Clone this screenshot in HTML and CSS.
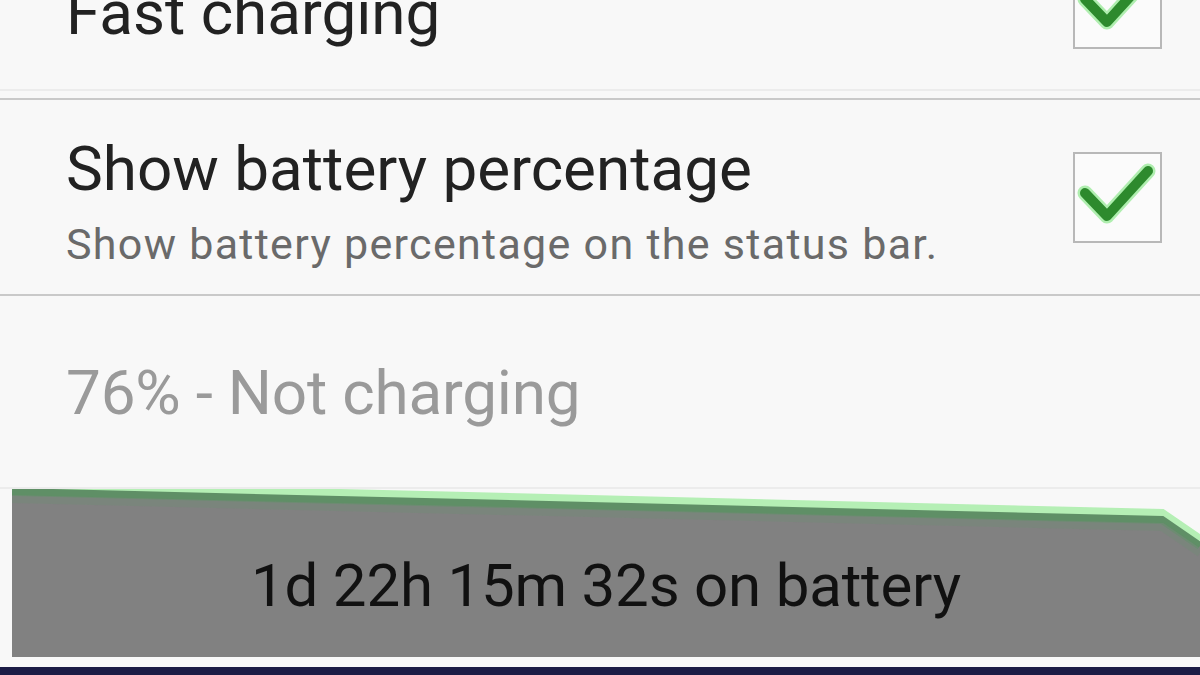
FILE: index.html
```html
<!DOCTYPE html>
<html>
<head>
<meta charset="utf-8">
<link rel="stylesheet" href="styles.css">
</head>
<body>
<div class="screen">
  <div class="row row-first">
    <div class="text"><div class="title title-first">Fast charging</div></div>
    <div class="check">
      <svg viewBox="0 0 85 87" width="85" height="87"><path class="glow" d="M10 39 L32 62 L73 17"/><path class="mark" d="M10 39 L32 62 L73 17"/></svg>
    </div>
  </div>
  <div class="divider double"></div>
  <div class="row row-second">
    <div class="text text-pad">
      <div class="title">Show battery percentage</div>
      <div class="sub">Show battery percentage on the status bar.</div>
    </div>
    <div class="check">
      <svg viewBox="0 0 85 87" width="85" height="87"><path class="glow" d="M10 39 L32 62 L73 17"/><path class="mark" d="M10 39 L32 62 L73 17"/></svg>
    </div>
  </div>
  <div class="divider"></div>
  <div class="row row-status">
    <div class="text"><div class="status">76% - Not charging</div></div>
  </div>
  <div class="thin"></div>
  <div class="graph">
    <svg class="graph-bg" viewBox="0 0 1188 168" preserveAspectRatio="none">
      <polygon points="0,2 1150,30 1188,56 1188,168 0,168" fill="#818181"/>
      <polyline points="0,-3 1150,25 1188,51" fill="none" stroke="#b5efb5" stroke-width="10"/>
      <polyline points="0,3 1150,31 1188,57" fill="none" stroke="#5f8f66" stroke-width="8"/>
      <polyline points="0,10 1150,38 1188,64" fill="none" stroke="#77887a" stroke-width="8" opacity="0.6"/>
    </svg>
    <div class="graph-label">1d 22h 15m 32s on battery</div>
  </div>
  <div class="navbar"></div>
</div>
</body>
</html>
```
FILE: styles.css
```css
html, body {
  margin: 0;
  padding: 0;
  background: #f8f8f8;
  width: 1200px;
  height: 675px;
  overflow: hidden;
}
.screen {
  width: 1200px;
  height: 675px;
  display: flex;
  flex-direction: column;
  font-family: Roboto, "Noto Sans", sans-serif;
  overflow: hidden;
}
.row {
  display: flex;
  align-items: center;
  justify-content: space-between;
  padding-left: 66px;
  padding-right: 38px;
  flex: none;
}
.row-first {
  height: 190px;
  margin-top: -92px;
}
.title-first {
  margin-top: 20px;
}
.row-second {
  height: 194px;
}
.text-pad {
  padding-top: 10px;
}
.row-status {
  height: 191px;
}
.title {
  font-size: 62px;
  color: #222222;
  line-height: 70px;
}
.sub {
  font-size: 43px;
  color: #6a6a6a;
  line-height: 52px;
  letter-spacing: 1.3px;
  margin-top: 14px;
}
.status {
  font-size: 62px;
  color: #9a9a9a;
  margin-top: 2px;
  letter-spacing: -0.2px;
}
.check {
  width: 85px;
  height: 87px;
  border: 2px solid #b8b8b8;
  background: #fbfbfb;
  flex: none;
}
.check svg {
  display: block;
}
.check .mark {
  fill: none;
  stroke: #2d8a2d;
  stroke-width: 10;
  stroke-linecap: round;
  stroke-linejoin: round;
}
.check .glow {
  fill: none;
  stroke: #8fe88f;
  stroke-width: 15;
  stroke-linecap: round;
  stroke-linejoin: round;
  opacity: 0.7;
}
.divider {
  height: 2px;
  background: #c9c9c9;
  flex: none;
}
.divider.double {
  box-shadow: 0 -9px 0 0 #ececec;
}
.thin {
  height: 2px;
  background: #ececec;
  flex: none;
}
.graph {
  position: relative;
  height: 168px;
  margin-left: 12px;
  flex: none;
  display: flex;
  align-items: center;
  justify-content: center;
}
.graph-bg {
  position: absolute;
  left: 0;
  top: 0;
  width: 100%;
  height: 100%;
}
.graph-label {
  position: relative;
  font-size: 60px;
  color: #111111;
  margin-top: 24px;
  letter-spacing: -0.2px;
}
.navbar {
  margin-top: 10px;
  height: 8px;
  background: #1b1b45;
  flex: none;
}
```
